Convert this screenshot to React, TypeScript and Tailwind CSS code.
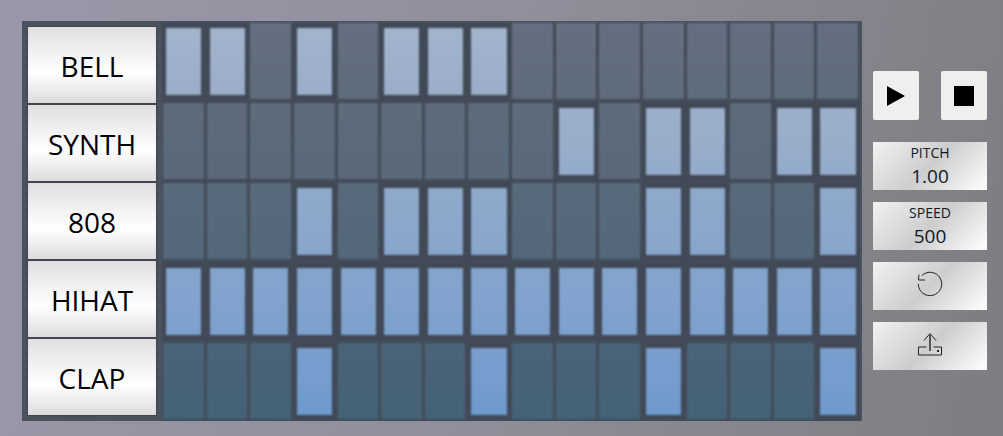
const tracks = [
  {
    name: 'BELL',
    steps: [1, 1, 0, 1, 0, 1, 1, 1, 0, 0, 0, 0, 0, 0, 0, 0],
    off: 'bg-gradient-to-b from-[#647080] to-[#5f6c7b]',
    on: 'bg-gradient-to-b from-[#a3b4cd] to-[#9badc9]',
  },
  {
    name: 'SYNTH',
    steps: [0, 0, 0, 0, 0, 0, 0, 0, 0, 1, 0, 1, 1, 0, 1, 1],
    off: 'bg-gradient-to-b from-[#5e6b7a] to-[#5a6a7b]',
    on: 'bg-gradient-to-b from-[#9db0ca] to-[#94abcb]',
  },
  {
    name: '808',
    steps: [0, 0, 0, 1, 0, 1, 1, 1, 0, 0, 0, 1, 1, 0, 0, 1],
    off: 'bg-gradient-to-b from-[#596a7b] to-[#54687a]',
    on: 'bg-gradient-to-b from-[#90a9cb] to-[#88a6cc]',
  },
  {
    name: 'HIHAT',
    steps: [1, 1, 1, 1, 1, 1, 1, 1, 1, 1, 1, 1, 1, 1, 1, 1],
    off: 'bg-gradient-to-b from-[#52667a] to-[#4d6479]',
    on: 'bg-gradient-to-b from-[#85a5cd] to-[#7da1cd]',
  },
  {
    name: 'CLAP',
    steps: [0, 0, 0, 1, 0, 0, 0, 1, 0, 0, 0, 1, 0, 0, 0, 1],
    off: 'bg-gradient-to-b from-[#4a6378] to-[#456277]',
    on: 'bg-gradient-to-b from-[#799fcd] to-[#6f9acd]',
  },
];

const sideBtn = 'w-[114px] h-12 flex flex-col items-center justify-center bg-[linear-gradient(135deg,#f2f2f2_0%,#cdcdcd_50%,#ffffff_100%)] text-[#111827]';

function Step({ active, off, on }: { active: number; off: string; on: string }) {
  return (
    <div className={`ml-px mr-[2px] mb-1 h-[76px] pt-[5px] pb-1 pl-[3px] pr-[2.5px] blur-[0.8px] ${active === 1 ? 'bg-[#414956]' : off}`}>
      {active === 1 && <div className={`w-full h-full shadow-[0_0_2px_#363d49] ${on}`} />}
    </div>
  );
}

export default function App() {
  return (
    <div className="w-[1003px] h-[436px] overflow-hidden flex pl-[22px] pt-[21px] bg-[linear-gradient(100deg,#9a98a8_0%,#8f8e9a_50%,#7d7d82_100%)] font-['Open_Sans','Noto_Sans',sans-serif]">
      <div className="w-[840px] h-[400px] flex bg-[#4a525e]">
        <div className="w-[140px] shrink-0 pl-[5px] pt-[5px] flex flex-col">
          {tracks.map(track => (
            <div
              key={track.name}
              className="w-[130px] h-[78px] pt-[1px] flex items-center justify-center border border-[#3f4650] bg-[linear-gradient(180deg,#dfdfdf_0%,#ffffff_60%,#dcdcdc_100%)] text-[28px] text-black"
            >
              {track.name}
            </div>
          ))}
        </div>

        <div className="w-[698px] h-[398px] mt-[2px] bg-[#434b57] grid grid-cols-16 auto-rows-[80px]">
          {tracks.map(track =>
            track.steps.map((s, i) => (
              <Step key={track.name + i} active={s} off={track.off} on={track.on} />
            )),
          )}
        </div>
      </div>

      <div className="ml-[11px] pt-[50px] flex flex-col">
        <div className="flex justify-between w-[114px] mb-[22px]">
          <button className="w-[46px] h-[49px] rounded-[2px] bg-[#efefef] flex items-center justify-center">
            <svg width="18" height="20" viewBox="0 0 18 20">
              <polygon points="0,0 18,10 0,20" fill="#000" />
            </svg>
          </button>
          <button className="w-[46px] h-[49px] rounded-[2px] bg-[#efefef] flex items-center justify-center">
            <div className="w-5 h-5 bg-black" />
          </button>
        </div>

        <div className="flex flex-col gap-3">
          <div className={sideBtn}>
            <span className="text-[14px] leading-[18px] mt-[1px]">PITCH</span>
            <span className="text-[19px] leading-[26px] mt-[1px]">1.00</span>
          </div>
          <div className={sideBtn}>
            <span className="text-[14px] leading-[18px] mt-[1px]">SPEED</span>
            <span className="text-[19px] leading-[26px] mt-[1px]">500</span>
          </div>
          <button className={sideBtn}>
            <svg className="mb-1" width="28" height="28" viewBox="0 0 28 28" fill="none" stroke="#222" strokeWidth="1">
              <path d="M5.8 5.6 A11.7 11.7 0 1 1 2.3 14" />
              <path d="M3 4.5 L2.5 10 L9 10" />
            </svg>
          </button>
          <button className={sideBtn}>
            <svg className="mb-1" width="26" height="26" viewBox="0 0 26 26" fill="none" stroke="#222" strokeWidth="1">
              <path d="M9.5 16 H1.5 V24 H24.5 V16 H16.5" />
              <path d="M13 20 V4" stroke="#555" strokeWidth="2" />
              <path d="M7 9.5 L13 2.5 L19 9.5" />
              <rect x="20" y="19" width="2" height="2" fill="#222" stroke="none" />
            </svg>
          </button>
        </div>
      </div>
    </div>
  );
}
